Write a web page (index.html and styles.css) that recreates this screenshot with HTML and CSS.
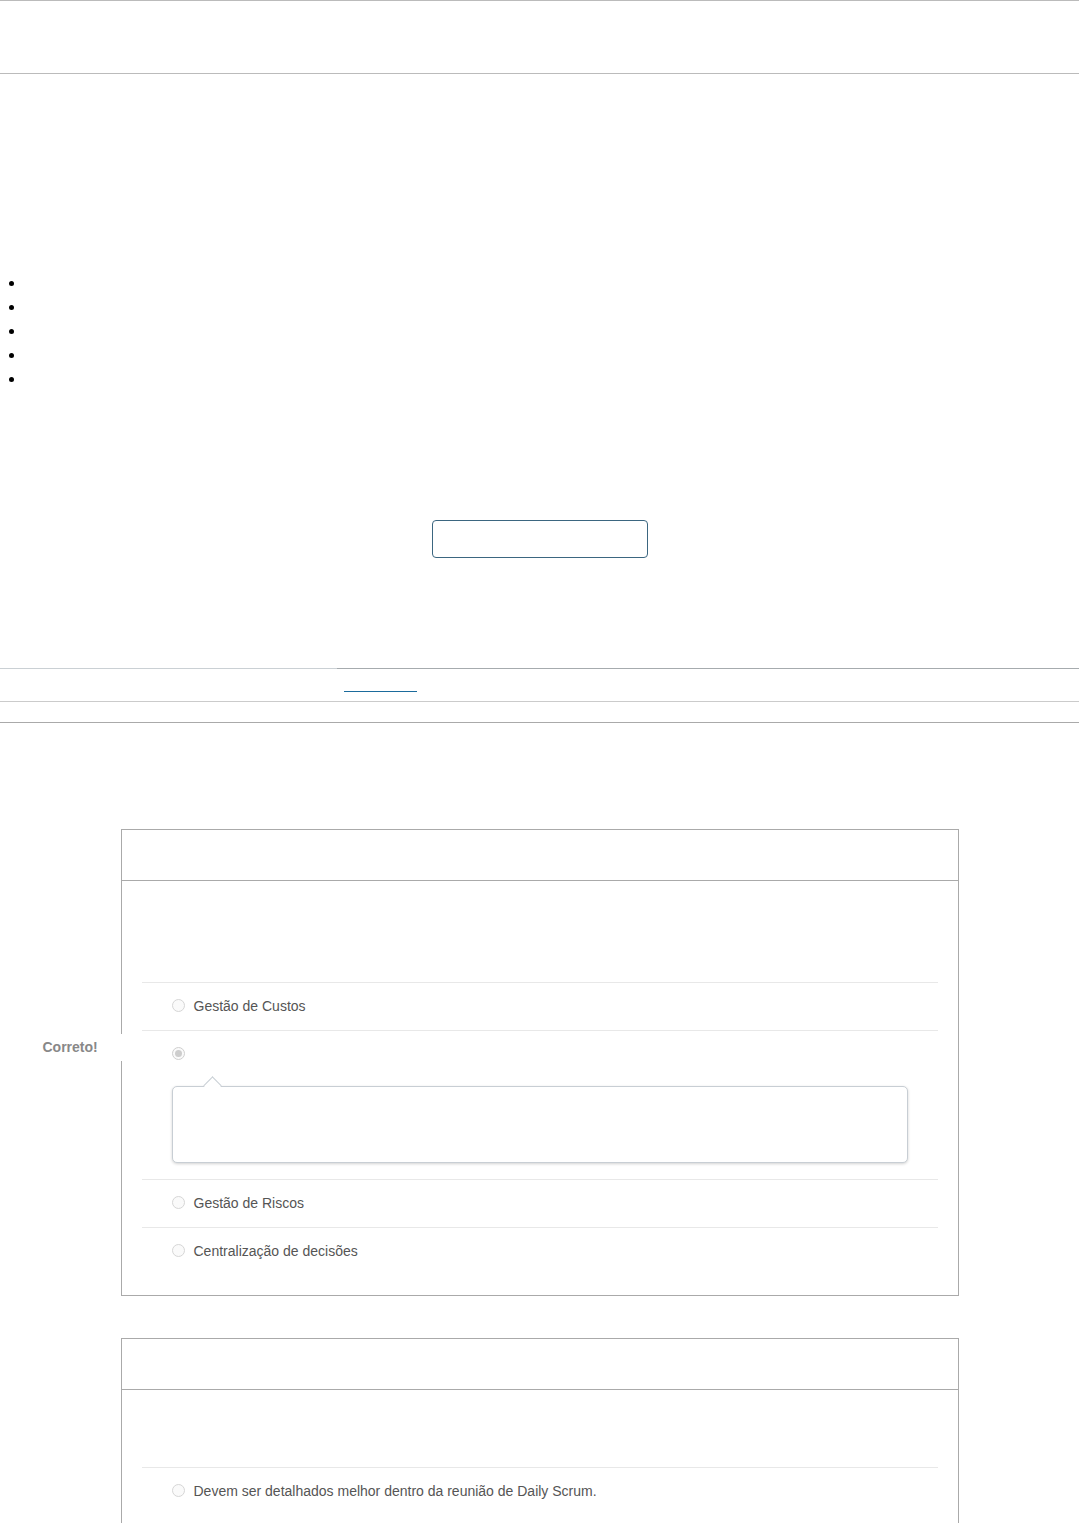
FILE: index.html
```html
<!DOCTYPE html>
<html>
<head>
  <meta charset="UTF-8">
  <title>Quiz</title>
  <link rel="stylesheet" href="styles.css">
</head>
<body>
<div class="topbar"></div>

<ul class="menu">
  <li>&nbsp;</li>
  <li>&nbsp;</li>
  <li>&nbsp;</li>
  <li>&nbsp;</li>
  <li>&nbsp;</li>
</ul>

<div class="actions">
  <button class="btn" type="button"></button>
</div>

<div class="tabs">
  <div class="tab-side"></div>
  <div class="tab-main">
    <div class="tab-active"></div>
  </div>
</div>
<div class="subbar"></div>

<div class="quiz">
  <div class="question">
    <div class="question-header"></div>
    <div class="question-body">
      <div class="question-text q1"></div>
      <div class="answers">
        <div class="answer">
          <div class="answer-line"><span class="radio"></span>Gestão de Custos</div>
        </div>
        <div class="answer selected">
          <span class="flag">Correto!</span>
          <div class="answer-line"><span class="radio checked"></span></div>
          <div class="feedback"></div>
        </div>
        <div class="answer">
          <div class="answer-line"><span class="radio"></span>Gestão de Riscos</div>
        </div>
        <div class="answer">
          <div class="answer-line"><span class="radio"></span>Centralização de decisões</div>
        </div>
      </div>
    </div>
  </div>

  <div class="question">
    <div class="question-header"></div>
    <div class="question-body">
      <div class="question-text q2"></div>
      <div class="answers">
        <div class="answer">
          <div class="answer-line"><span class="radio"></span>Devem ser detalhados melhor dentro da reunião de Daily Scrum.</div>
        </div>
      </div>
    </div>
  </div>
</div>
</body>
</html>
```

FILE: styles.css
```css
body { margin: 0; font-family: "Liberation Sans", Arial, sans-serif; font-size: 14px; color: #555; background: #fff; }

.topbar { height: 72px; border-top: 1px solid #bbb; border-bottom: 1px solid #bbb; }

.menu { margin: 197px 0 0; padding-left: 25px; font-size: 16px; line-height: 24px; color: #000; }

.actions { display: flex; justify-content: center; margin-top: 129px; }
.btn { width: 216px; height: 38px; border: 1px solid #3b6680; border-radius: 4px; background: #fff; }

.tabs { display: flex; margin-top: 110px; border-bottom: 1px solid #cbcbcb; }
.tab-side { width: 337px; height: 32px; border-top: 1px solid #cad0d4; }
.tab-main { flex: 1; height: 32px; border-top: 1px solid #a6abae; }
.tab-active { width: 73px; height: 22px; margin-left: 7px; border-bottom: 1px solid #1b6b9c; }
.subbar { height: 20px; border-bottom: 1px solid #aaa; }

.quiz { max-width: 838px; margin: 106px auto 0; }
.question { border: 1px solid #aaa; margin-bottom: 42px; }
.question-header { height: 50px; border-bottom: 1px solid #aaa; }
.question-body { padding: 0 20px 20px; }
.question-text.q1 { height: 101px; }
.question-text.q2 { height: 77px; }

.answer { position: relative; border-top: 1px solid #e8e8e8; padding: 13px 0 14px 30px; }
.answer-line { display: flex; align-items: center; line-height: 20px; min-height: 20px; }

.radio { position: relative; top: -1px; width: 11px; height: 11px; margin-right: 9px; border: 1px solid #d6d6d6; border-radius: 50%; background: #fafafa; box-sizing: content-box; }
.radio.checked { border-color: #cfcfcf; }
.radio.checked::after { content: ""; position: absolute; left: 2px; top: 2px; width: 7px; height: 7px; border-radius: 50%; background: #cdcdcd; }

.flag { position: absolute; left: -99px; top: 3px; width: 85px; padding: 4px 0; line-height: 19px; background: #fff; font-weight: bold; color: #888; }

.feedback { position: relative; height: 75px; margin: 22px 30px 2px 0; border: 1px solid #c8ced4; border-radius: 5px; background: #fff; box-shadow: 0 1px 3px rgba(0, 0, 0, 0.18); }
.feedback::before { content: ""; position: absolute; left: 33px; top: -8px; width: 12px; height: 12px; background: #fff; border-top: 1px solid #c8ced4; border-left: 1px solid #c8ced4; transform: rotate(45deg); }
```
